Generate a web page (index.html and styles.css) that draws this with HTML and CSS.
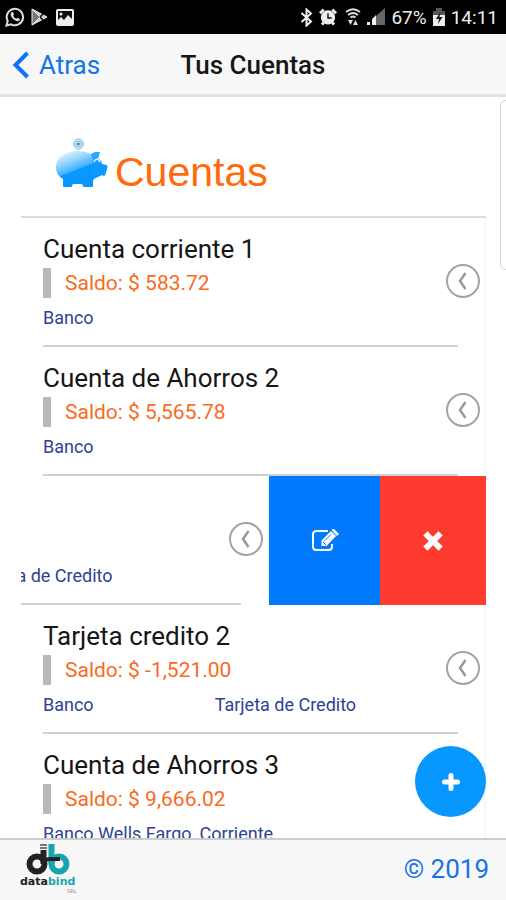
FILE: index.html
```html
<!DOCTYPE html>
<html lang="es">
<head>
<meta charset="utf-8">
<meta name="viewport" content="width=device-width, initial-scale=1">
<title>Tus Cuentas</title>
<link rel="stylesheet" href="styles.css">
</head>
<body>
<svg class="defs" aria-hidden="true">
  <symbol id="chevron" viewBox="0 0 34 34">
    <circle cx="17" cy="17" r="16" fill="none" stroke="#a3a3a3" stroke-width="2"/>
    <path d="M19.500 9 14 17l5.500 8" fill="none" stroke="#999" stroke-width="2.500"/>
  </symbol>
</svg>

<div class="status">
  <svg width="20" height="20" viewBox="0 0 20 20" fill="none" stroke="#ddd">
    <path d="M1.500 18.500 2.700 14A8.200 8.200 0 1 1 6 17.300Z" stroke-width="2"/>
    <path d="M6.200 5.500q1-1 1.800-.2l1 2.200-.8 1.300q1 2 3 3l1.300-1 2.200 1.100q.5 1-.6 1.900-2 1.500-5.600-1.500Q4.300 8.500 6.200 5.500Z" fill="#ddd" stroke="none"/>
  </svg>
  <svg width="17" height="18" viewBox="0 0 17 18">
    <path d="M1 1v16l8-8Z" fill="#777" stroke="#eee"/>
    <path d="M1 1l15 8-15 8 8-8Z" fill="#ccc" stroke="#eee"/>
    <path d="M9 9l3-3M9 9l3 3" stroke="#111" stroke-width="1.500"/>
  </svg>
  <svg class="photo" width="18" height="17" viewBox="0 0 18 17">
    <rect x="1" y="1" width="16" height="15" rx="1" fill="#111" stroke="#eee" stroke-width="2"/>
    <path d="M2 15v-4l3-3 3 3 4-5 4 4v5Z" fill="#eee"/>
    <circle cx="5" cy="5" r="1.500" fill="#eee"/>
  </svg>
  <span class="spacer"></span>
  <svg width="13" height="19" viewBox="0 0 13 19" fill="none" stroke="#eee" stroke-width="2">
    <path d="M1.500 5 11 13.500 6.500 17.500v-16L11 5.500 1.500 14"/>
  </svg>
  <svg width="18" height="18" viewBox="0 0 19 18">
    <circle cx="9.500" cy="9.500" r="7.500" fill="#eee"/>
    <path d="M1 5 5 1M18 5l-4-4M3 17l2-2M16 17l-2-2" stroke="#eee" stroke-width="3"/>
    <path d="M9.500 5v5h4" fill="none" stroke="#111" stroke-width="1.500"/>
  </svg>
  <svg class="wifi" width="16" height="18" viewBox="0 0 16 18" fill="none" stroke="#ddd" stroke-width="1.800">
    <path d="M1 4q7-5.500 14 0M3 7q5-4 10 0M5.500 9.500q2.500-2 5 0"/>
    <path d="M3 12h5L5.500 17ZM8 17h5l-2.500-5Z" fill="#ddd" stroke="none"/>
  </svg>
  <svg width="18" height="18" viewBox="0 0 18 18">
    <path d="M9 8 18 0v17H9Z" fill="#666"/>
    <path d="M0 14h3v3H0ZM4 12l5-5v10H4Z" fill="#eee"/>
    <path d="M4.500 11v6" stroke="#000"/>
  </svg>
  <span>67%</span>
  <svg width="12" height="18" viewBox="0 0 12 18">
    <path d="M0 3h3V0h6v3h3v15H0Z" fill="#555"/>
    <path d="M0 7h12v11H0Z" fill="#eee"/>
    <path d="M7.500 4 3 11h3l-1 5 4.500-7h-3Z" fill="#111"/>
  </svg>
  <span class="time">14:11</span>
</div>

<header class="bar">
  <a class="back" href="#">
    <svg width="18" height="28" viewBox="0 0 18 28" fill="none" stroke="#0a76f5" stroke-width="4"><path d="M15.500 2 3.500 14l12 12"/></svg>
    Atras
  </a>
  <h1>Tus Cuentas</h1>
</header>

<main>
  <div class="brand">
    <svg width="54" height="52" viewBox="0 0 54 52">
      <defs><linearGradient id="pig" gradientUnits="userSpaceOnUse" x1="12" y1="14" x2="26" y2="50">
        <stop offset="0" stop-color="#e2f5ff"/><stop offset=".25" stop-color="#9bd8ff"/><stop offset=".52" stop-color="#45b2ff"/><stop offset=".56" stop-color="#0898ff"/><stop offset="1" stop-color="#0696ff"/>
      </linearGradient></defs>
      <circle cx="23.500" cy="7" r="5" fill="#d4ecfa" stroke="#7bbfe6"/>
      <circle cx="23.500" cy="7" r="2.800" fill="none" stroke="#72b5de"/>
      <circle cx="23.500" cy="7" r="1.200" fill="#246f9e"/>
      <path d="M1 31C1 20 11 14 23 14q7 0 13 3l4-2h5l-2 6q3 2 4 6l4 1q2 0 1 4l-2 6q-1 1-3 0l-8 4q-1 1-1 3v4q0 1-1 1h-8q-1 0-1-1l-1-2H18l-1 2q0 1-1 1H9q-1 0-1-1v-7Q1 38 1 31Z" fill="url(#pig)"/>
      <path d="M36 17l4-2h5l-2 6q3 2 4 6l4 1q2 0 1 4l-2 6q-1 1-3 0l-8 3Q40 28 36 17Z" fill="#109bff" opacity=".75"/>
      <path d="M39 25q1-3 4-3l2 3" fill="none" stroke="#d8f0ff" stroke-width="1.500"/>
    </svg>
    <h2>Cuentas</h2>
  </div>

  <ul class="accounts">
    <li>
      <div class="item">
        <div class="info">
          <h3>Cuenta corriente 1</h3>
          <p class="balance">Saldo: $ 583.72</p>
          <p class="bank"><span>Banco</span></p>
        </div>
        <button class="more" aria-label="Opciones"><svg width="34" height="34"><use href="#chevron"/></svg></button>
      </div>
    </li>
    <li>
      <div class="item">
        <div class="info">
          <h3>Cuenta de Ahorros 2</h3>
          <p class="balance">Saldo: $ 5,565.78</p>
          <p class="bank"><span>Banco</span></p>
        </div>
        <button class="more" aria-label="Opciones"><svg width="34" height="34"><use href="#chevron"/></svg></button>
      </div>
    </li>
    <li class="open">
      <div class="item">
        <div class="info">
          <h3>Tarjeta 1</h3>
          <p class="balance">Saldo: $ 0.00</p>
          <p class="bank"><span>BN</span><span>Tarjeta de Credito</span></p>
        </div>
        <button class="more" aria-label="Opciones"><svg width="34" height="34"><use href="#chevron"/></svg></button>
      </div>
      <div class="actions">
        <button class="edit" aria-label="Editar">
          <svg width="28" height="24" viewBox="0 0 28 24" fill="none" stroke="#fff">
            <path d="M17 2H5.500Q2 2 2 5.500v12Q2 21 5.500 21h12q3.500 0 3.500-3.500V15" stroke-width="2"/>
            <path d="M10.500 17v-5.500L20 2l5 5-9.500 10Z" fill="#fff" stroke="none"/>
            <path d="M21 1l1.500-1L27.500 5 26 6.500Z" fill="#fff" stroke="#fff"/>
            <path d="M12 13l3 3M14 11.500 20 5.500" stroke="#007aff"/>
          </svg>
        </button>
        <button class="delete" aria-label="Eliminar">
          <svg width="20" height="20" viewBox="0 0 20 20"><path d="M4.500 4.500l11 11M15.500 4.500l-11 11" stroke="#fff" stroke-width="6" stroke-linecap="square"/></svg>
        </button>
      </div>
    </li>
    <li>
      <div class="item">
        <div class="info">
          <h3>Tarjeta credito 2</h3>
          <p class="balance">Saldo: $ -1,521.00</p>
          <p class="bank"><span>Banco</span><span>Tarjeta de Credito</span></p>
        </div>
        <button class="more" aria-label="Opciones"><svg width="34" height="34"><use href="#chevron"/></svg></button>
      </div>
    </li>
    <li>
      <div class="item">
        <div class="info">
          <h3>Cuenta de Ahorros 3</h3>
          <p class="balance">Saldo: $ 9,666.02</p>
          <p class="bank"><span>Banco Wells Fargo, Corriente</span></p>
        </div>
      </div>
    </li>
  </ul>
  <div class="thumb"></div>
  <button class="fab" aria-label="Agregar cuenta">
    <svg width="18" height="18" viewBox="0 0 18 18"><path d="M9 2.500v13M2.500 9h13" stroke="#fff" stroke-width="5" stroke-linecap="round"/></svg>
  </button>
</main>

<footer>
  <svg width="60" height="52" viewBox="0 0 60 52" role="img" aria-label="databind">
    <g fill="none" stroke-width="6">
      <circle cx="17" cy="21" r="7.500" stroke="#222"/>
      <circle cx="39" cy="21" r="7.500" stroke="#16a5ae"/>
      <path d="M31.500 1v20" stroke="#16a5ae"/>
      <path d="M23.500 7v14" stroke="#222"/>
      <path d="M22 20q3-4 9-4h9" stroke="#222" stroke-width="4"/>
      <path d="M20 2h7M20 5h7" stroke="#777" stroke-width="2"/>
    </g>
    <text class="logo" x="0" y="42" fill="#222">data<tspan fill="#16a5ae">bind</tspan></text>
    <text class="logo-sub" x="47" y="50" fill="#888">SRL</text>
  </svg>
  <a href="#">© 2019</a>
</footer>
</body>
</html>
```
FILE: styles.css
```css
* { box-sizing: border-box; margin: 0; padding: 0; }

body {
  display: flex;
  flex-direction: column;
  height: 100vh;
  overflow: hidden;
  background: #fff;
  color: #161616;
  font-family: Roboto, sans-serif;
}

button { border: 0; background: none; cursor: pointer; }
a { color: #1673e6; text-decoration: none; }
svg { display: block; flex: none; }
.defs { position: absolute; width: 0; height: 0; }

.status {
  display: flex;
  align-items: center;
  gap: 6px;
  flex: none;
  height: 34px;
  padding: 0 8px 0 5px;
  background: #000;
  color: #eee;
  font-size: 19px;
}
.spacer { flex: 1; }
.wifi { margin-left: 2px; }
.photo { margin-left: 2px; }

.bar {
  display: grid;
  grid-template-columns: 1fr auto 1fr;
  align-items: center;
  flex: none;
  height: 63px;
  padding: 2px 12px 0;
  border-bottom: 3px solid #e2e2e2;
  background: #f7f7f7;
}
.back {
  display: flex;
  align-items: center;
  gap: 9px;
  font-size: 26px;
}
h1 { font-size: 26px; font-weight: 500; line-height: 34px; }

main {
  position: relative;
  flex: 1;
  min-height: 0;
  overflow: hidden;
}
.brand {
  display: flex;
  align-items: flex-end;
  gap: 6px;
  height: 119px;
  padding: 0 55px 27px;
}
.brand h2 {
  color: #ff6a0a;
  font: 41px/34px "Liberation Sans", sans-serif;
}

.accounts {
  margin: 0 20px 0 21px;
  border-top: 2px solid #dcdcdc;
  background: linear-gradient(#f3f9f9, #f3f9f9) right / 2px 100% no-repeat;
  list-style: none;
}
.accounts li { display: flex; overflow: hidden; }
.item {
  position: relative;
  flex: 0 0 100%;
  padding: 0 28px 0 22px;
}
.open .item { margin-left: -217px; }
.info {
  height: 129px;
  padding-top: 16px;
  border-bottom: 2px solid #d2d2d2;
  white-space: nowrap;
}
h3 { font-size: 26px; font-weight: 400; line-height: 30px; }
.balance {
  margin: 4px 0 8px;
  padding-left: 14px;
  border-left: 8px solid #b9b9b9;
  color: #fa6a1e;
  font-size: 21px;
  line-height: 30px;
}
.bank {
  display: flex;
  gap: 121px;
  color: #2d4293;
  font-size: 18px;
  line-height: 24px;
}
.more {
  position: absolute;
  right: 6px;
  top: 46px;
}
.actions { display: flex; flex: 0 0 217px; }
.actions button { display: grid; place-items: center; }
.edit { flex: 111; background: #007aff; }
.delete { flex: 106; background: #ff3b30; }

.thumb {
  position: absolute;
  top: 3px;
  right: -8px;
  width: 14px;
  height: 170px;
  border: 1px solid #d4d4d4;
  border-radius: 6px;
}
.fab {
  position: absolute;
  right: 20px;
  bottom: 21px;
  display: grid;
  place-items: center;
  width: 71px;
  height: 71px;
  border-radius: 50%;
  background: #0797ff;
}

footer {
  display: flex;
  align-items: center;
  justify-content: space-between;
  flex: none;
  height: 62px;
  padding: 0 17px 2px 20px;
  border-top: 2px solid #ccc;
  background: #f7f7f7;
  font-size: 26px;
}
.logo { font: bold 11px "DejaVu Sans", sans-serif; }
.logo-sub { font: 5px "DejaVu Sans", sans-serif; }
```
